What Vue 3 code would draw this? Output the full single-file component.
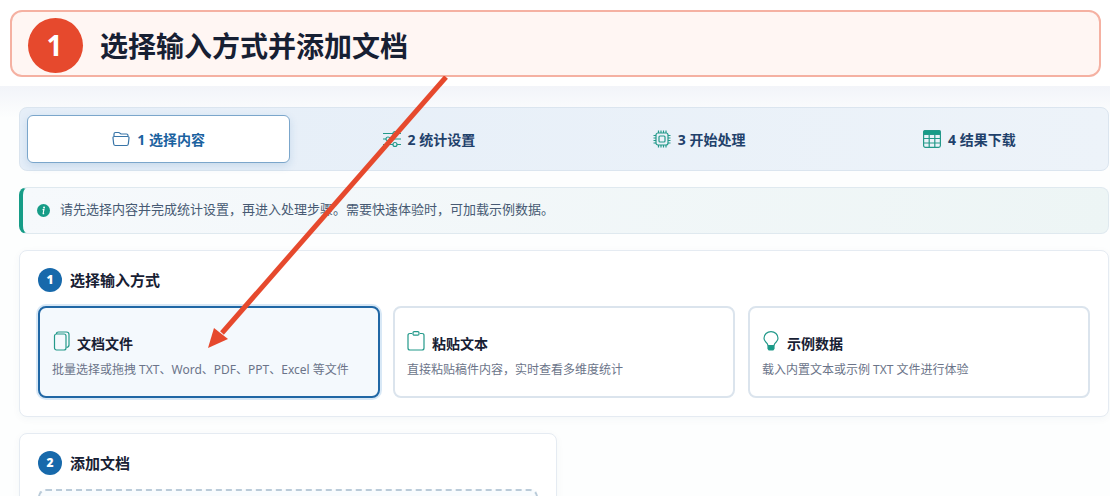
<script setup>
import { ref } from 'vue'

const step = ref('folder')
const steps = [
  { icon: 'folder', label: '1 选择内容' },
  { icon: 'sliders', label: '2 统计设置' },
  { icon: 'cpu', label: '3 开始处理' },
  { icon: 'table', label: '4 结果下载' },
]

const source = ref('files')
const sources = [
  { icon: 'files', title: '文档文件', text: '批量选择或拖拽 TXT、Word、PDF、PPT、Excel 等文件' },
  { icon: 'clipboard', title: '粘贴文本', text: '直接粘贴稿件内容，实时查看多维度统计' },
  { icon: 'bulb', title: '示例数据', text: '载入内置文本或示例 TXT 文件进行体验' },
]
</script>

<template>
  <div class="page">
    <header class="top">
      <div class="callout">
        <span class="callout-num">1</span>
        <h1>选择输入方式并添加文档</h1>
      </div>
    </header>

    <main class="content">
      <nav class="steps">
        <button
          v-for="s in steps"
          :key="s.icon"
          type="button"
          class="step"
          :class="{ active: step === s.icon }"
          @click="step = s.icon"
        >
          <svg v-if="s.icon === 'folder'" class="icon" viewBox="0 0 18 18">
            <path d="M2 7V4Q2 2.500 3.500 2.500H6.500Q7.300 2.500 8 3.200L9 4H14.500Q16 4 16 5.500V7M2.400 6.500H15.600Q17.200 6.500 17 8L16.300 14Q16.100 15.500 14.600 15.500H3.400Q1.900 15.500 1.700 14L1 8Q.8 6.500 2.400 6.500Z" />
          </svg>
          <svg v-else-if="s.icon === 'sliders'" class="icon" viewBox="0 0 18 18">
            <path d="M0 3.500H10M14 3.500H18M0 9H3M7 9H18M0 14.500H10M14 14.500H18" />
            <circle cx="12" cy="3.500" r="2" />
            <circle cx="5" cy="9" r="2" />
            <circle cx="12" cy="14.500" r="2" />
          </svg>
          <svg v-else-if="s.icon === 'cpu'" class="icon" viewBox="0 0 18 18">
            <rect x="3" y="3" width="12" height="12" rx="2" />
            <rect x="6" y="6" width="6" height="6" rx="1" />
            <path d="M5.500 3V.5M8 3V.5M10.500 3V.5M13 3V.5M5.500 17.500V15M8 17.500V15M10.500 17.500V15M13 17.500V15M3 5.500H.5M3 8H.5M3 10.500H.5M3 13H.5M17.500 5.500H15M17.500 8H15M17.500 10.500H15M17.500 13H15" />
          </svg>
          <svg v-else class="icon" viewBox="0 0 18 18">
            <rect x=".6" y=".6" width="16.800" height="16.800" rx="1.800" />
            <path class="solid" d="M.6 4.400V2.400Q.6.600 2.400.600H15.600Q17.400.600 17.400 2.400V4.400Z" />
            <path d="M1 8.500H17M1 13H17M6.200 4V17M11.800 4V17" />
          </svg>
          <span>{{ s.label }}</span>
        </button>
      </nav>

      <p class="notice">
        <svg class="info" viewBox="0 0 14 14">
          <circle cx="7" cy="7" r="7" />
          <circle class="mark" cx="7.600" cy="3.800" r="1" />
          <path class="stem" d="M6 6.100L7.500 5.800L6.600 10.200Q6.600 10.800 7.700 10.200" />
        </svg>
        <span>请先选择内容并完成统计设置，再进入处理步骤。需要快速体验时，可加载示例数据。</span>
      </p>

      <section class="panel">
        <h2><span class="num">1</span>选择输入方式</h2>
        <div class="cards">
          <button
            v-for="c in sources"
            :key="c.icon"
            type="button"
            class="card"
            :class="{ active: source === c.icon }"
            @click="source = c.icon"
          >
            <span class="card-title">
              <svg v-if="c.icon === 'files'" class="icon tall" viewBox="0 0 18 20">
                <rect x="2.500" y="3" width="11.500" height="16" rx="2" />
                <path d="M4.500 3Q4.500 1 6.500 1H14.500Q17 1 17 3.500V14Q17 16 14.500 16.500" />
              </svg>
              <svg v-else-if="c.icon === 'clipboard'" class="icon tall" viewBox="0 0 18 20">
                <path d="M5 2.500H3Q1 2.500 1 4.500V17Q1 19 3 19H15Q17 19 17 17V4.500Q17 2.500 15 2.500H13" />
                <rect x="6" y=".6" width="6" height="3.600" rx="1.200" />
              </svg>
              <svg v-else class="icon tall" viewBox="0 0 18 20">
                <path d="M6 14.500Q5.700 12.800 3.800 11Q2 9.200 2 7.200A7 6.600 0 0 1 16 7.200Q16 9.200 14.200 11Q12.300 12.800 12 14.500Z" />
                <path class="solid" d="M6 15H12V17.500L11 19H7L6 17.500Z" />
              </svg>
              <span>{{ c.title }}</span>
            </span>
            <span class="card-text">{{ c.text }}</span>
          </button>
        </div>
      </section>

      <section class="panel upload">
        <h2><span class="num">2</span>添加文档</h2>
        <div class="dropzone"></div>
      </section>
    </main>

    <svg class="arrow" viewBox="0 0 240 274" aria-hidden="true">
      <path class="shaft" d="M238 1L14 257" />
      <path class="head" d="M0 272L6 252L20 263Z" />
    </svg>
  </div>
</template>

<style>
body {
  margin: 0;
}
</style>

<style scoped>
.page,
.page * {
  box-sizing: border-box;
}
.page {
  position: relative;
  height: 100vh;
  overflow: hidden;
  display: flex;
  flex-direction: column;
  background: #fdfefe;
  color: #172033;
  font-family: "Noto Sans", "Noto Sans CJK SC", sans-serif;
}
.top {
  padding: 10px 9px 9px 10px;
  background: #fff;
}
.callout {
  display: flex;
  align-items: center;
  gap: 17px;
  height: 67px;
  padding: 4px 16px 0;
  border: 2px solid #f5b1a2;
  border-radius: 12px;
  background: #fff6f3;
}
.callout-num {
  display: flex;
  align-items: center;
  justify-content: center;
  width: 55px;
  height: 55px;
  padding: 0 2px 2px 0;
  border-radius: 50%;
  background: #e6492d;
  color: #fff;
  font-size: 28px;
  font-weight: 700;
}
h1 {
  margin: 0;
  font-size: 28px;
  line-height: 40px;
  font-weight: 700;
}
.content {
  flex: 1;
  display: flex;
  flex-direction: column;
  gap: 16px;
  padding: 21px 1px 0 19px;
  background: linear-gradient(#f2f4f9, #fdfefe 32px);
}
.steps {
  display: grid;
  grid-template-columns: repeat(4, 1fr);
  gap: 7px;
  flex-shrink: 0;
  padding: 7px;
  border: 1px solid #dbe5ef;
  border-radius: 8px;
  background: linear-gradient(90deg, #e5eef8, #edf3f9);
}
.step {
  display: flex;
  align-items: center;
  justify-content: center;
  gap: 7px;
  height: 48px;
  padding: 0;
  border: 1px solid transparent;
  border-radius: 6px;
  background: none;
  color: #1f416b;
  font: inherit;
  font-size: 14px;
  font-weight: 700;
}
.step.active {
  border-color: #7ba6cb;
  background: #fff;
  color: #1b629f;
  box-shadow: 0 3px 8px #1c68a826;
}
.icon {
  flex: none;
  width: 18px;
  height: 18px;
  fill: none;
  stroke: #23998a;
  stroke-width: 1.2;
}
.icon.tall {
  height: 20px;
}
.icon .solid {
  fill: #169c87;
}
.step.active .icon {
  stroke: #3975a8;
}
.notice {
  display: flex;
  align-items: center;
  gap: 10px;
  flex-shrink: 0;
  height: 47px;
  margin: 0;
  padding: 0 14px 3px;
  border: 1px solid #dfe9ef;
  border-left: 4px solid #169c87;
  border-radius: 8px;
  background: linear-gradient(100deg, #f6f9fc, #edf5f5);
  color: #475a73;
  font-size: 13px;
  line-height: 20px;
}
.info {
  width: 13px;
  height: 13px;
  margin-top: 3px;
  fill: #169c87;
}
.info .mark {
  fill: #fff;
}
.info .stem {
  fill: none;
  stroke: #fff;
  stroke-width: 1.2;
}
.panel {
  flex-shrink: 0;
  padding: 17px 18px 18px;
  border: 1px solid #e5ebf2;
  border-radius: 8px;
  background: #fff;
  box-shadow: 0 2px 8px #1d40700a;
}
h2 {
  display: flex;
  align-items: center;
  gap: 8px;
  margin: 0 0 14px;
  font-size: 15px;
  line-height: 24px;
  font-weight: 700;
}
.num {
  display: flex;
  align-items: center;
  justify-content: center;
  width: 24px;
  height: 24px;
  border-radius: 50%;
  background: #1769ab;
  color: #fff;
  font-size: 12px;
  font-weight: 900;
}
.cards {
  display: grid;
  grid-template-columns: repeat(3, 1fr);
  gap: 13px;
}
.card {
  display: flex;
  flex-direction: column;
  gap: 5px;
  height: 92px;
  padding: 23px 12px 0;
  border: 2px solid #dbe4ed;
  border-radius: 8px;
  background: #fff;
  color: #172033;
  font: inherit;
  text-align: left;
}
.card.active {
  border-color: #2067a5;
  background: #f4f9fd;
  box-shadow: 0 0 0 2px #d8e8f6;
}
.card-title {
  display: flex;
  align-items: flex-start;
  gap: 7px;
  font-size: 14px;
  line-height: 25px;
  font-weight: 700;
}
.card-text {
  color: #6b7489;
  font-size: 12px;
  line-height: 18px;
}
.upload {
  width: 538px;
  max-width: 100%;
}
.dropzone {
  height: 140px;
  border: 2px dashed #bacbd9;
  border-radius: 8px;
  background: #f9fcfe;
}
.arrow {
  position: absolute;
  left: 208px;
  top: 76px;
  width: 240px;
  height: 274px;
  pointer-events: none;
}
.shaft {
  fill: none;
  stroke: #e6492d;
  stroke-width: 5;
}
.head {
  fill: #e6492d;
}
</style>
